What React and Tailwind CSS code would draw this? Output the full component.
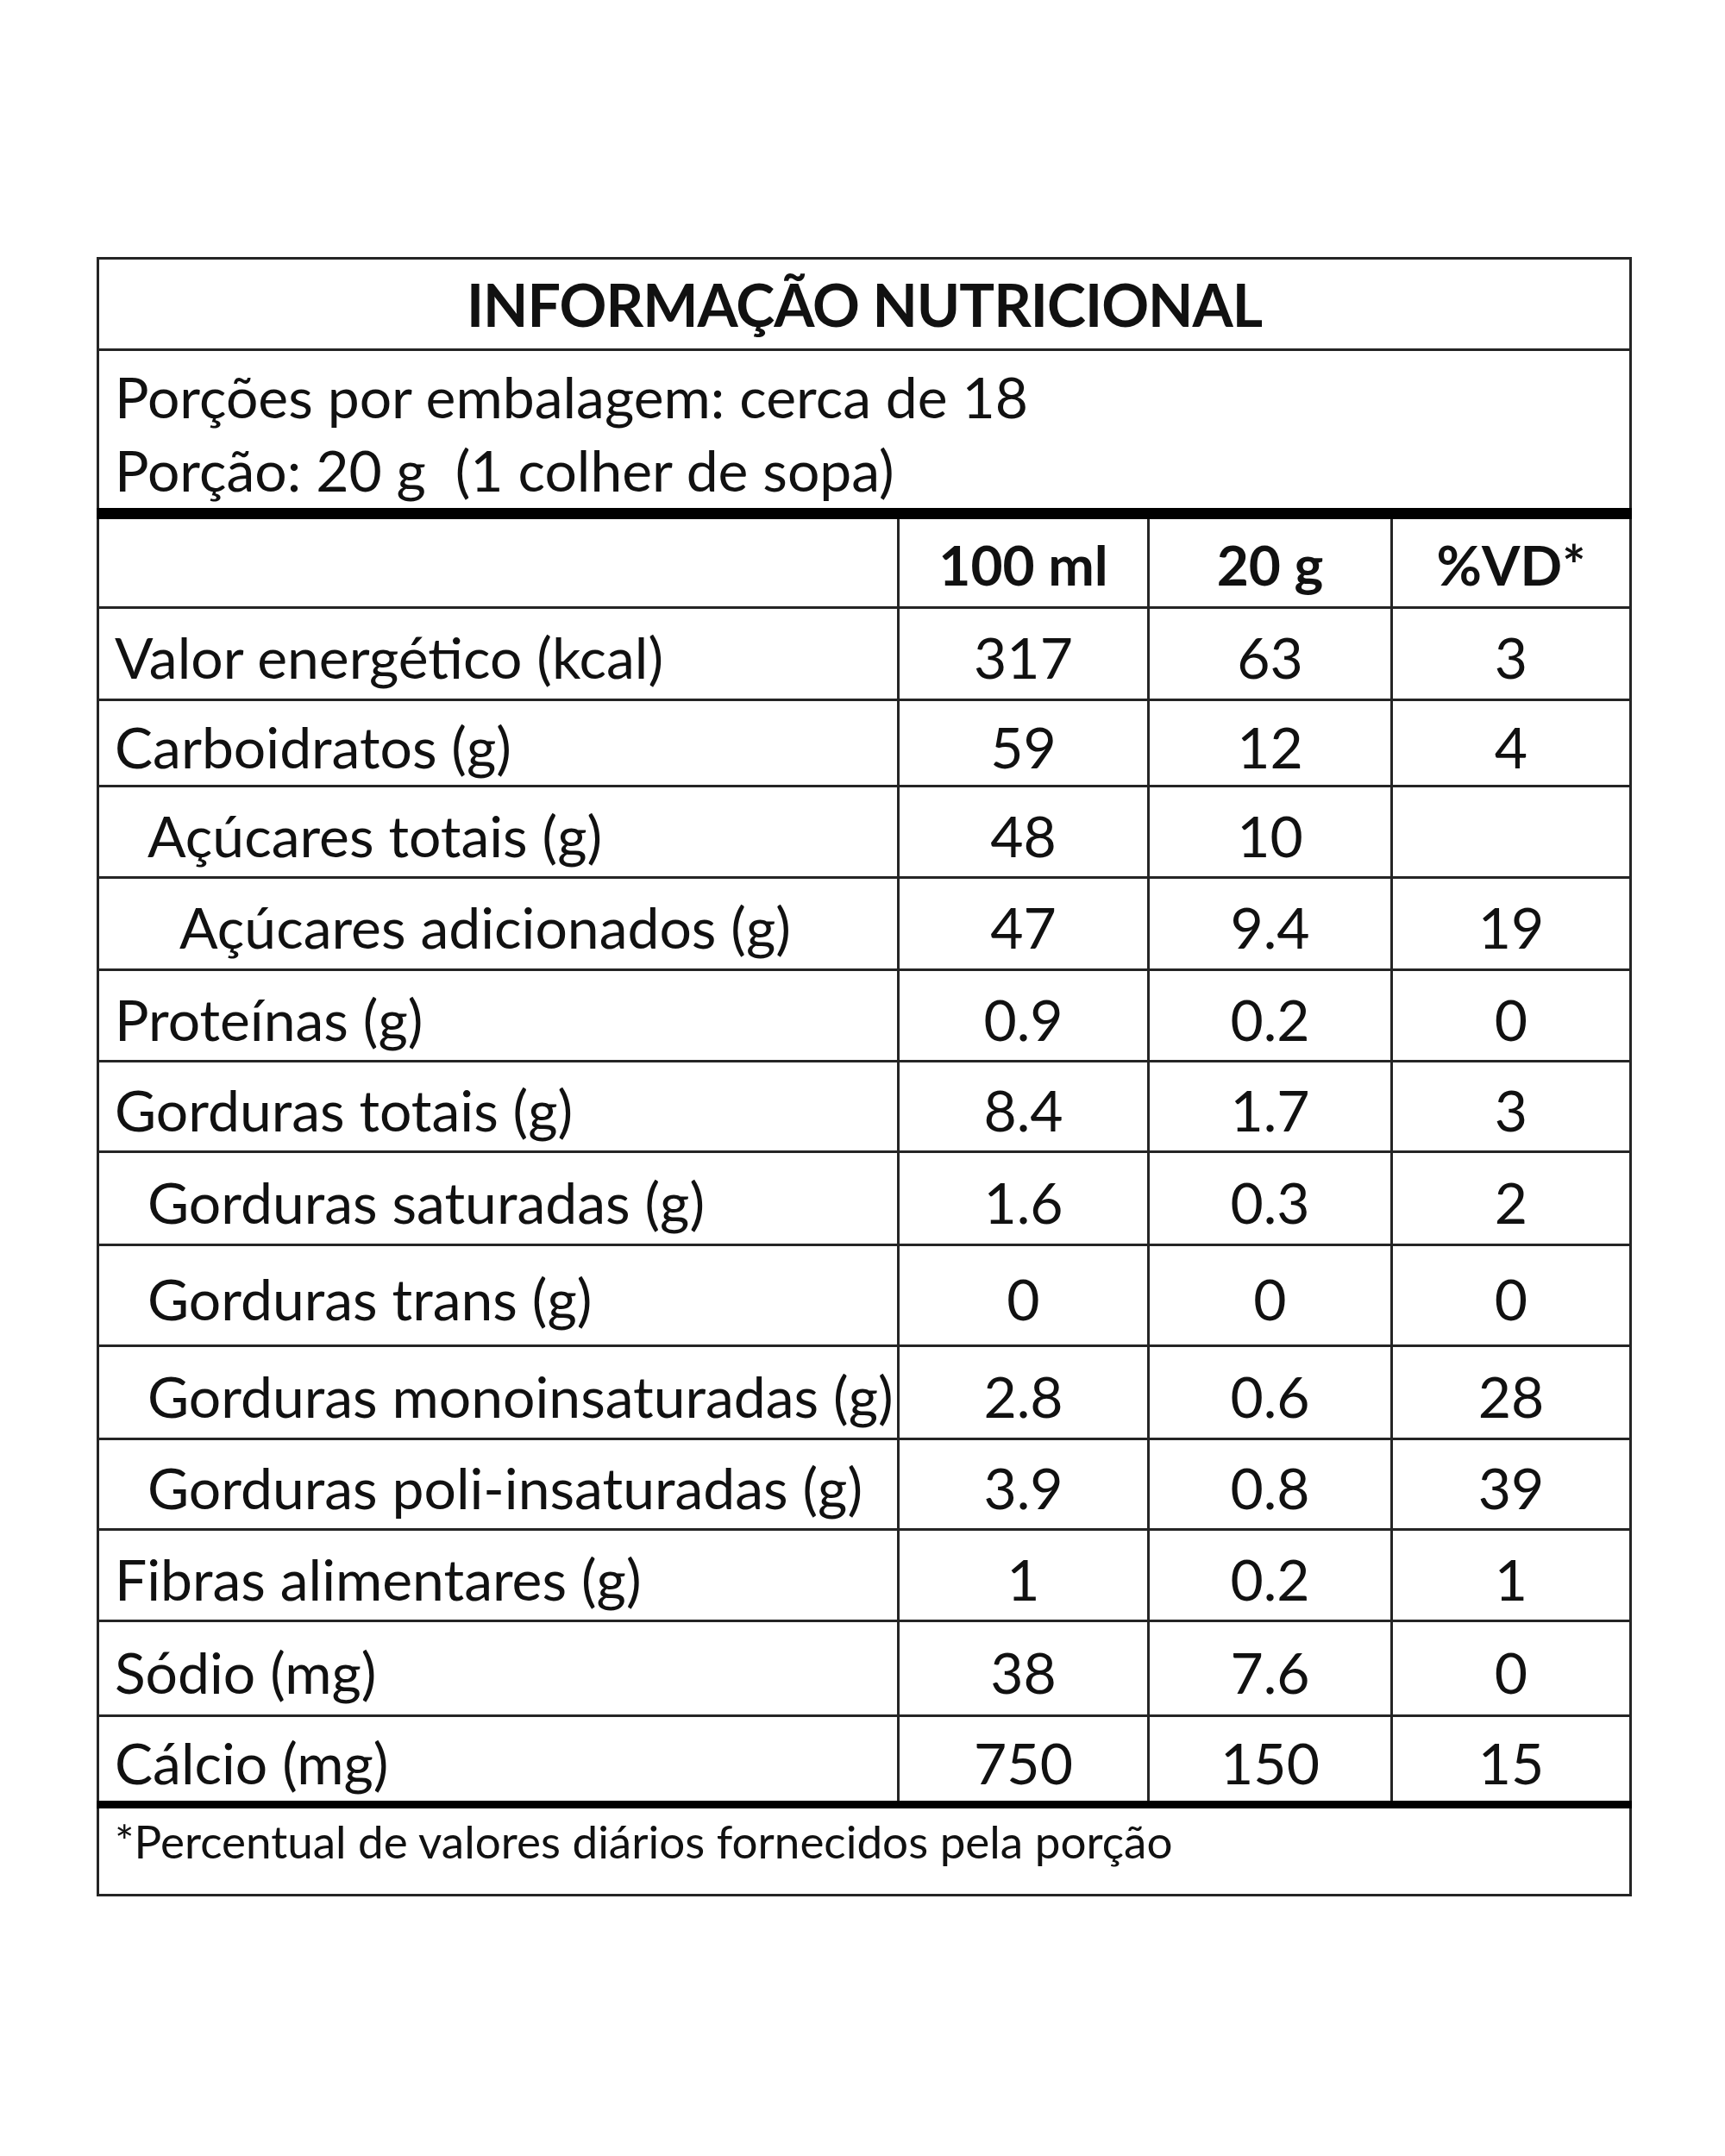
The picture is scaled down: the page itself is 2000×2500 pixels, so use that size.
import React from 'react';

const rows = [
  { label: 'Valor energético (kcal)', indent: 0, a: '317', b: '63', c: '3', h: 'h-[107px]' },
  { label: 'Carboidratos (g)', indent: 0, a: '59', b: '12', c: '4', h: 'h-[100px]' },
  { label: 'Açúcares totais (g)', indent: 1, a: '48', b: '10', c: '', h: 'h-[106px]' },
  { label: 'Açúcares adicionados (g)', indent: 2, a: '47', b: '9.4', c: '19', h: 'h-[107px]' },
  { label: 'Proteínas (g)', indent: 0, a: '0.9', b: '0.2', c: '0', h: 'h-[106px]' },
  { label: 'Gorduras totais (g)', indent: 0, a: '8.4', b: '1.7', c: '3', h: 'h-[105px]' },
  { label: 'Gorduras saturadas (g)', indent: 1, a: '1.6', b: '0.3', c: '2', h: 'h-[108px]' },
  { label: 'Gorduras trans (g)', indent: 1, a: '0', b: '0', c: '0', h: 'h-[117px]' },
  { label: 'Gorduras monoinsaturadas (g)', indent: 1, a: '2.8', b: '0.6', c: '28', h: 'h-[108px]' },
  { label: 'Gorduras poli-insaturadas (g)', indent: 1, a: '3.9', b: '0.8', c: '39', h: 'h-[105px]' },
  { label: 'Fibras alimentares (g)', indent: 0, a: '1', b: '0.2', c: '1', h: 'h-[106px]' },
  { label: 'Sódio (mg)', indent: 0, a: '38', b: '7.6', c: '0', h: 'h-[110px]' },
  { label: 'Cálcio (mg)', indent: 0, a: '750', b: '150', c: '15', h: 'h-[103px]' },
];

const indents = ['pl-[18px]', 'pl-[56px]', 'pl-[93px]'];

const cell = 'border-[3px] border-[#252525]';

export default function App() {
  return (
    <div className="min-h-[2500px] w-[2000px] bg-white pl-[112px] pt-[298px] text-[#111] font-['Lato','Liberation_Sans',sans-serif]">
      <table className="w-[1777px] table-fixed border-collapse">
        <colgroup>
          <col className="w-[928px]" />
          <col className="w-[290px]" />
          <col className="w-[282px]" />
          <col className="w-[277px]" />
        </colgroup>
        <tbody>
          <tr>
            <td colSpan={4} className={`${cell} h-[106px] text-center text-[68px] font-bold tracking-[-1px] leading-none`}>
              INFORMAÇÃO NUTRICIONAL
            </td>
          </tr>
          <tr>
            <td colSpan={4} className={`${cell} border-b-[13px] border-b-black h-[190px] pl-[18px] pt-[10px] align-top text-[66px] leading-[85px]`}>
              <div>Porções por embalagem: cerca de 18</div>
              <div>Porção: 20 g&nbsp; (1 colher de sopa)</div>
            </td>
          </tr>
          <tr className="h-[109px] text-[64px] leading-[80px] font-bold">
            <td className={cell}></td>
            <td className={`${cell} pt-[4px] text-center`}>100 ml</td>
            <td className={`${cell} pt-[4px] text-center`}>20 g</td>
            <td className={`${cell} pt-[4px] text-center`}>%VD*</td>
          </tr>
          {rows.map((r, i) => (
            <tr key={i} className={`${r.h} text-[66px] leading-[80px]`}>
              <td className={`${cell} ${indents[r.indent]} pt-[8px] whitespace-nowrap`}>{r.label}</td>
              <td className={`${cell} pt-[8px] text-center`}>{r.a}</td>
              <td className={`${cell} pt-[8px] text-center`}>{r.b}</td>
              <td className={`${cell} pt-[8px] text-center`}>{r.c}</td>
            </tr>
          ))}
          <tr>
            <td colSpan={4} className={`${cell} border-t-[9px] border-t-black h-[105px] pl-[18px] pt-[8px] align-top text-[53px] leading-[60px]`}>
              *Percentual de valores diários fornecidos pela porção
            </td>
          </tr>
        </tbody>
      </table>
    </div>
  );
}
